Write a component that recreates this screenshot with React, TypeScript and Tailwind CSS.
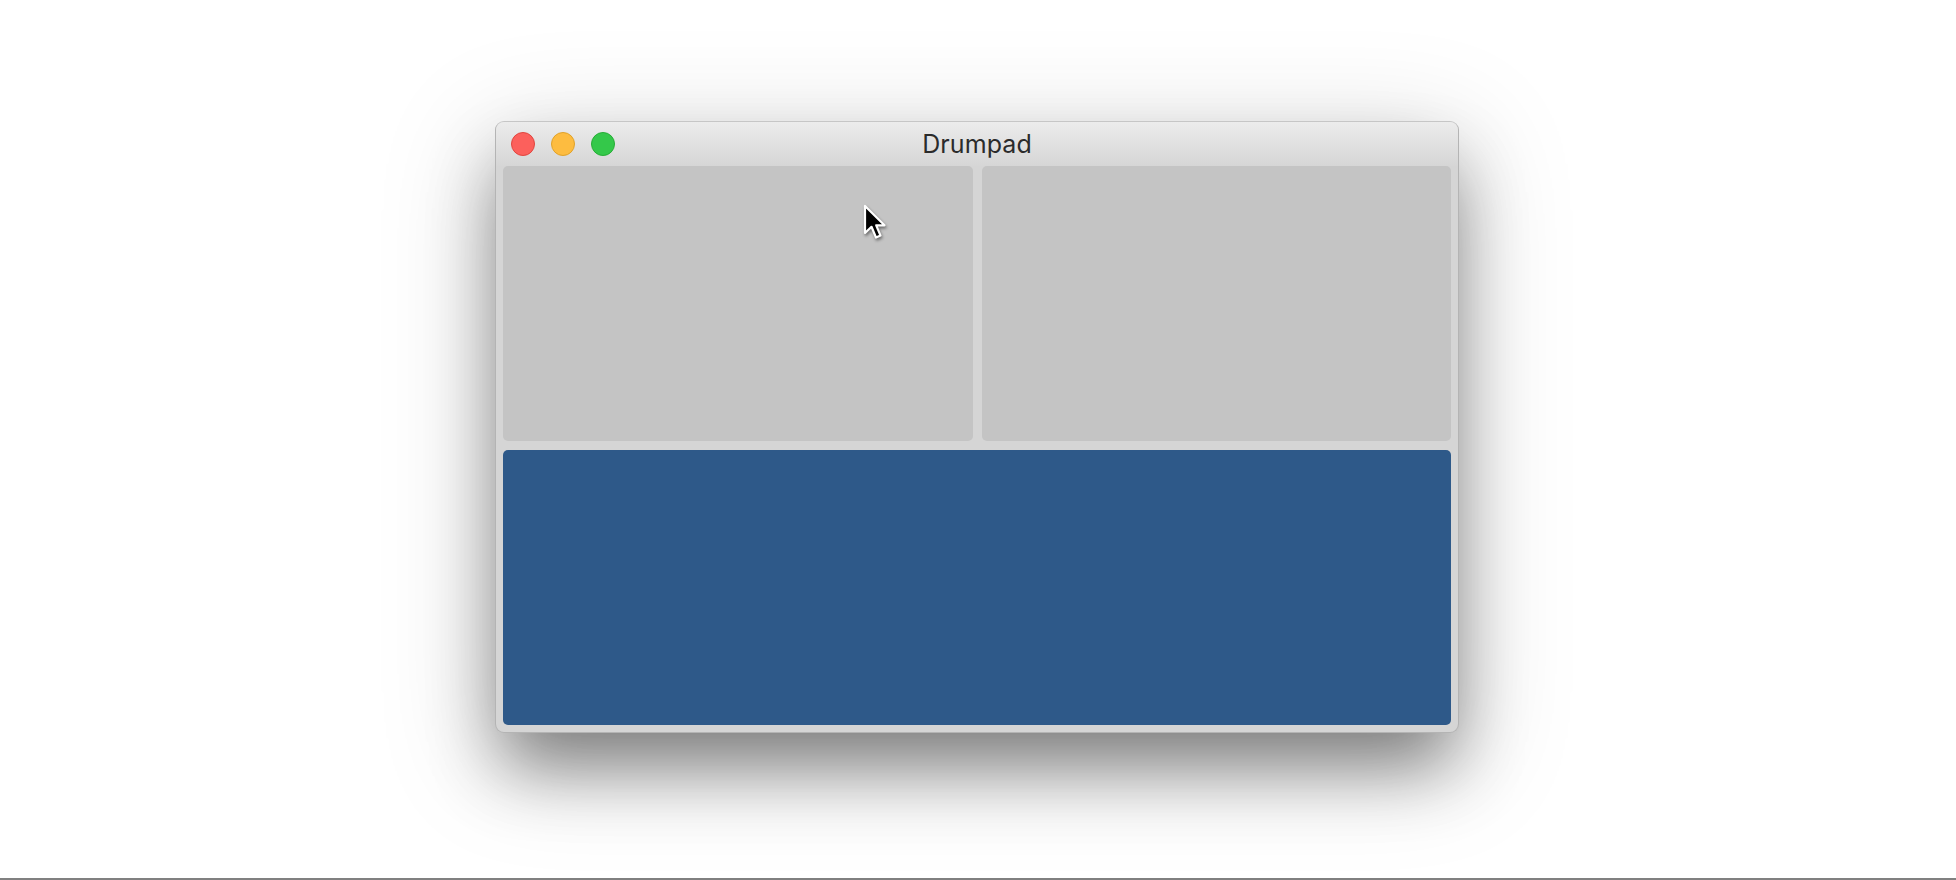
import React from "react";

function Cursor() {
  return (
    <svg
      className="absolute left-[862px] top-[203px] drop-shadow-[1px_2px_1.5px_rgba(0,0,0,0.45)]"
      width="26"
      height="40"
      viewBox="0 0 26 40"
    >
      <path
        d="M3 3 L3 30 L9.5 23.8 L14 34.5 L18.5 32.6 L14.2 22.3 L22.5 22.3 Z"
        fill="#000"
        stroke="#fff"
        strokeWidth="2.2"
        strokeLinejoin="round"
      />
    </svg>
  );
}

export default function App() {
  return (
    <div className="relative w-[1956px] h-[880px] bg-white flex flex-col overflow-hidden font-['Inter','Liberation_Sans',sans-serif]">
      <div className="flex-1 flex justify-center pt-[121px] pr-[2px]">
        <div className="w-[964px] h-[612px] rounded-[9px] border border-[#b4b4b4] border-t-[#c6c6c6] bg-[#d5d5d5] flex flex-col overflow-hidden shadow-[0_40px_70px_-8px_rgba(0,0,0,0.45),0_24px_110px_12px_rgba(0,0,0,0.15)]">
          <div className="h-[44px] shrink-0 grid grid-cols-[1fr_auto_1fr] items-center bg-gradient-to-b from-[#ececec] to-[#d6d6d6] px-[15px]">
            <div className="flex items-center gap-[16px]">
              <span className="w-[24px] h-[24px] rounded-full bg-[#fc605c] border border-[#e0463f]" />
              <span className="w-[24px] h-[24px] rounded-full bg-[#fdbc40] border border-[#e0a22a]" />
              <span className="w-[24px] h-[24px] rounded-full bg-[#34c84a] border border-[#27ad36]" />
            </div>
            <div className="text-[25px] leading-none text-[#2b2b2b] tracking-[0.1px] pt-[1px]">
              Drumpad
            </div>
            <div />
          </div>
          <div className="flex-1 flex flex-col gap-[9px] px-[7px] pb-[7px]">
            <div className="flex-1 flex gap-[9px]">
              <div className="flex-1 rounded-[5px] bg-[#c4c4c4]" />
              <div className="flex-1 rounded-[5px] bg-[#c4c4c4]" />
            </div>
            <div className="flex-1 rounded-[5px] bg-[#2e5989]" />
          </div>
        </div>
      </div>
      <div className="h-[2px] shrink-0 bg-[#808080]" />
      <Cursor />
    </div>
  );
}
